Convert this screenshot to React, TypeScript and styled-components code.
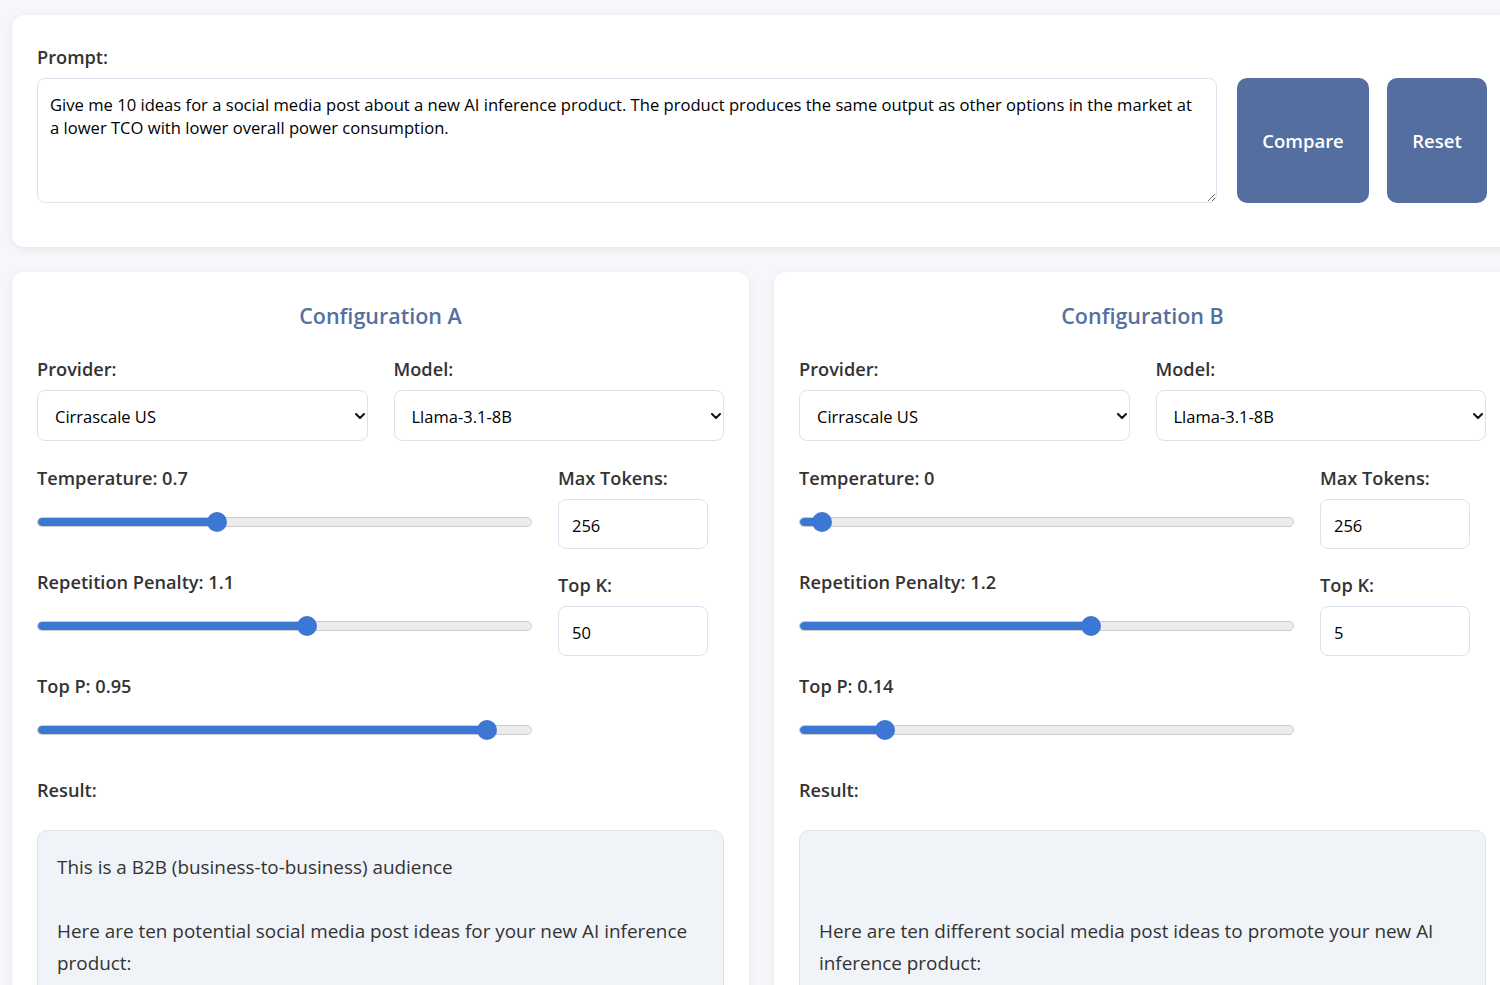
import styled, { createGlobalStyle } from "styled-components";
import { useState } from "react";

const GlobalStyle = createGlobalStyle`
  body {
    margin: 0;
    background: #f5f7fa;
    font-family: "Open Sans", "Noto Sans", sans-serif;
    color: #333;
    overflow: hidden;
  }
  * {
    box-sizing: border-box;
  }
`;

const Page = styled.div`
  width: 1524px;
  padding: 15px 12px;
  display: flex;
  flex-direction: column;
  gap: 25px;
`;

const Card = styled.div`
  background: #fff;
  border-radius: 12px;
  box-shadow: 0 2px 10px rgba(0, 0, 0, 0.07);
  padding: 25px;
`;

const PromptCard = styled(Card)`
  padding: 30px 25px 44px;
`;

const Label = styled.div`
  font-size: 18.2px;
  font-weight: 600;
  line-height: 24px;
  color: #333;
`;

const PromptRow = styled.div`
  display: flex;
  gap: 20px;
  margin-top: 9px;
`;

const PromptInput = styled.textarea`
  flex: 1;
  height: 125px;
  padding: 14px 16px 12px 12px;
  border: 1px solid #dde0ef;
  border-radius: 8px;
  font-family: inherit;
  font-size: 16.6px;
  line-height: 23px;
  color: #000;
  resize: vertical;
  &:focus {
    outline: none;
  }
`;

const Buttons = styled.div`
  display: flex;
  gap: 18px;
`;

const ActionButton = styled.button<{ $width: number }>`
  width: ${(p) => p.$width}px;
  height: 125px;
  background: #546ea0;
  color: #fff;
  border: 0;
  border-radius: 10px;
  font-family: inherit;
  font-size: 18.5px;
  font-weight: 600;
  cursor: pointer;
`;

const ConfigGrid = styled.div`
  display: grid;
  grid-template-columns: 1fr 1fr;
  gap: 25px;
  padding-right: 1px;
`;

const Title = styled.h2`
  margin: 0 0 22px;
  text-align: center;
  font-size: 21.5px;
  font-weight: 600;
  line-height: 38px;
  color: #5470a0;
`;

const SelectRow = styled.div`
  display: grid;
  grid-template-columns: 1fr 1fr;
  gap: 26px;
`;

const Field = styled.div`
  display: flex;
  flex-direction: column;
  gap: 9px;
`;

const SelectWrap = styled.div`
  position: relative;
  svg {
    position: absolute;
    right: 3px;
    top: 23px;
    pointer-events: none;
  }
`;

const Select = styled.select`
  width: 100%;
  height: 51px;
  appearance: none;
  padding: 2px 17px 0;
  border: 1px solid #dde0ef;
  border-radius: 8px;
  background: #fff;
  font-family: inherit;
  font-size: 16.5px;
  color: #000;
`;

const ParamGrid = styled.div`
  display: grid;
  grid-template-columns: 1fr 166px;
  gap: 26px;
  margin-top: 25px;
`;

const SliderColumn = styled.div`
  display: flex;
  flex-direction: column;
  gap: 38px;
`;

const InputColumn = styled.div`
  display: flex;
  flex-direction: column;
  gap: 24px;
`;

const SliderField = styled.div`
  display: flex;
  flex-direction: column;
  gap: 22px;
`;

const SliderTrack = styled.div`
  position: relative;
  height: 20px;
  display: flex;
  align-items: center;
`;

const Rail = styled.div`
  width: 100%;
  height: 10px;
  border-radius: 5px;
  background: #ececec;
  border: 1px solid #cdcdcd;
  overflow: hidden;
`;

const Fill = styled.div`
  height: 100%;
  background: #3b77d3;
  border-radius: 5px 0 0 5px;
`;

const Thumb = styled.div`
  position: absolute;
  top: 0;
  width: 20px;
  height: 20px;
  margin-left: -10px;
  border-radius: 50%;
  background: #3b77d3;
`;

const NumberInput = styled.input`
  width: 150px;
  height: 50px;
  padding: 2px 13px 0;
  border: 1px solid #dde0ef;
  border-radius: 8px;
  font-family: inherit;
  font-size: 16.5px;
  color: #000;
`;

const ResultLabel = styled(Label)`
  margin-top: 38px;
`;

const ResultBox = styled.div`
  margin-top: 28px;
  padding: 20px 19px;
  min-height: 180px;
  background: #f0f3f8;
  border: 1px solid #dde3ec;
  border-radius: 10px;
  font-size: 18.9px;
  line-height: 32px;
  color: #333;
  white-space: pre-wrap;
`;

// small bold caret drawn at the right edge of each select
function Caret() {
  return (
    <svg width="10" height="6" viewBox="0 0 10 6">
      <polyline
        points="1,1 5,5 9,1"
        fill="none"
        stroke="#111"
        strokeWidth="2"
        strokeLinecap="round"
        strokeLinejoin="round"
      />
    </svg>
  );
}

type RangeProps = {
  label: string;
  value: number;
  min: number;
  max: number;
};

// thumb sits 23px in from each end of the rail
function Range({ label, value, min, max }: RangeProps) {
  const frac = (value - min) / (max - min);
  const pos = `calc(23px + (100% - 46px) * ${frac})`;
  return (
    <SliderField>
      <Label>
        {label}: {value}
      </Label>
      <SliderTrack>
        <Rail>
          <Fill style={{ width: pos }} />
        </Rail>
        <Thumb style={{ left: pos }} />
      </SliderTrack>
    </SliderField>
  );
}

interface IConfig {
  name: string;
  temperature: number;
  repetition: number;
  topP: number;
  maxTokens: number;
  topK: number;
  result: string;
}

const configs: IConfig[] = [
  {
    name: "Configuration A",
    temperature: 0.7,
    repetition: 1.1,
    topP: 0.95,
    maxTokens: 256,
    topK: 50,
    result:
      "This is a B2B (business-to-business) audience\n\nHere are ten potential social media post ideas for your new AI inference product:",
  },
  {
    name: "Configuration B",
    temperature: 0,
    repetition: 1.2,
    topP: 0.14,
    maxTokens: 256,
    topK: 5,
    result:
      "\n\nHere are ten different social media post ideas to promote your new AI inference product:",
  },
];

function ConfigCard({ config }: { config: IConfig }) {
  return (
    <Card>
      <Title>{config.name}</Title>
      <SelectRow>
        <Field>
          <Label>Provider:</Label>
          <SelectWrap>
            <Select defaultValue="cirrascale-us">
              <option value="cirrascale-us">Cirrascale US</option>
            </Select>
            <Caret />
          </SelectWrap>
        </Field>
        <Field>
          <Label>Model:</Label>
          <SelectWrap>
            <Select defaultValue="llama-3.1-8b">
              <option value="llama-3.1-8b">Llama-3.1-8B</option>
            </Select>
            <Caret />
          </SelectWrap>
        </Field>
      </SelectRow>
      <ParamGrid>
        <SliderColumn>
          <Range label="Temperature" value={config.temperature} min={0} max={2} />
          <Range label="Repetition Penalty" value={config.repetition} min={0} max={2} />
          <Range label="Top P" value={config.topP} min={0} max={1} />
        </SliderColumn>
        <InputColumn>
          <Field>
            <Label>Max Tokens:</Label>
            <NumberInput type="text" defaultValue={config.maxTokens} />
          </Field>
          <Field>
            <Label>Top K:</Label>
            <NumberInput type="text" defaultValue={config.topK} />
          </Field>
        </InputColumn>
      </ParamGrid>
      <ResultLabel>Result:</ResultLabel>
      <ResultBox>{config.result}</ResultBox>
    </Card>
  );
}

export default function App() {
  const [prompt, setPrompt] = useState(
    "Give me 10 ideas for a social media post about a new AI inference product. The product produces the same output as other options in the market at a lower TCO with lower overall power consumption."
  );

  return (
    <>
      <GlobalStyle />
      <Page>
        <PromptCard>
          <Label>Prompt:</Label>
          <PromptRow>
            <PromptInput value={prompt} onChange={(e) => setPrompt(e.target.value)} />
            <Buttons>
              <ActionButton $width={132}>Compare</ActionButton>
              <ActionButton $width={100}>Reset</ActionButton>
            </Buttons>
          </PromptRow>
        </PromptCard>
        <ConfigGrid>
          {configs.map((c) => (
            <ConfigCard key={c.name} config={c} />
          ))}
        </ConfigGrid>
      </Page>
    </>
  );
}
